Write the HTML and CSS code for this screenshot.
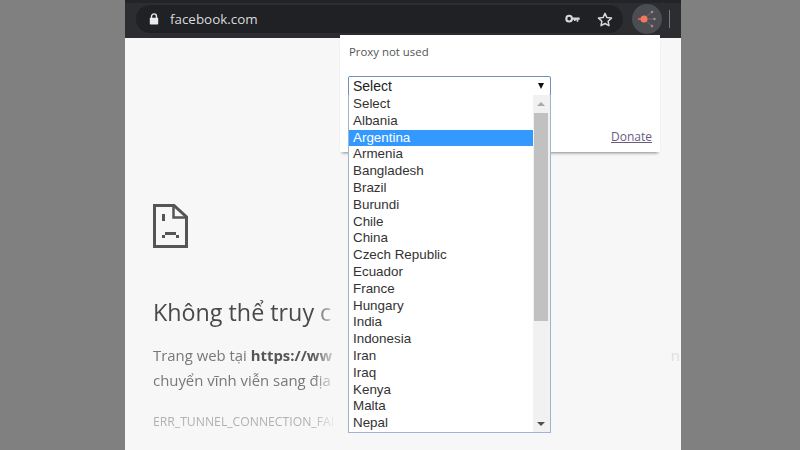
FILE: index.html
```html
<!DOCTYPE html>
<html lang="en">
<head>
    <meta charset="UTF-8">
    <meta name="viewport" content="width=device-width, initial-scale=1.0">
    <title>facebook.com</title>
    <link rel="stylesheet" href="styles.css">
</head>
<body>

    <div class="browser">
        <!-- Toolbar -->
        <div class="toolbar">
            <div class="omnibox">
                <svg class="lock" width="10" height="12" viewBox="0 0 10 12">
                    <path d="M2.500 5V3.400a2.500 2.500 0 0 1 5 0V5" fill="none" stroke="#e8eaed" stroke-width="1.400"/>
                    <rect x="0.800" y="4.800" width="8.400" height="6.800" rx="0.800" fill="#e8eaed"/>
                </svg>
                <span class="url">facebook.com</span>
                <svg class="key" width="15" height="10" viewBox="0 0 16 10">
                    <circle cx="4.400" cy="4.600" r="3" fill="none" stroke="#d5d7da" stroke-width="2.200"/>
                    <path d="M7 3.400h8.600v2.400h-1.400v2h-1.800v-2h-1v1.400H9.600V5.800H7z" fill="#d5d7da"/>
                </svg>
                <svg class="star" width="16" height="15" viewBox="0 0 16 15">
                    <path d="M8 1.400l1.900 4.200 4.600.5-3.400 3.100.9 4.500L8 11.500l-4 2.200.9-4.500L1.500 6.100l4.600-.5z" fill="none" stroke="#d5d7da" stroke-width="1.500" stroke-linejoin="round"/>
                </svg>
            </div>
            <div class="ext-btn">
                <svg width="24" height="24" viewBox="0 0 24 24">
                    <path d="M9 12L17 5M9 12L17 19M9 12H19" stroke="#7d6664" stroke-width="1"/>
                    <circle cx="17" cy="5" r="1.300" fill="#a98a88"/>
                    <circle cx="19.500" cy="12" r="1.200" fill="#a98a88"/>
                    <circle cx="17" cy="19" r="1.300" fill="#a98a88"/>
                    <rect x="3" y="11" width="4" height="2" fill="#e2574a"/>
                    <circle cx="9" cy="12" r="3.500" fill="#f0785f"/>
                </svg>
            </div>
            <div class="tb-divider"></div>
        </div>

        <!-- Error page -->
        <div class="page">
            <svg class="sad-tab" width="35" height="44" viewBox="0 0 35 44">
                <path d="M1.500 1.500H21L33.500 13V42.500H1.500z" fill="none" stroke="#545557" stroke-width="3"/>
                <path d="M20.500 2V13.500H33" fill="none" stroke="#545557" stroke-width="2.500"/>
                <rect x="9" y="10" width="3" height="7" fill="#545557"/>
                <path d="M9 34v-3h3v-3h11v3h3v3h-3v-3H12v3z" fill="#545557"/>
            </svg>
            <h1 class="err-title fade">Không thể truy c</h1>
            <p class="err-text">
                <span class="fade">Trang web tại <b>https://ww</b></span>
                <span class="err-stray">n</span>
            </p>
            <p class="err-text">
                <span class="fade">chuyển vĩnh viễn sang địa</span>
            </p>
            <div class="err-code fade">ERR_TUNNEL_CONNECTION_FAI</div>
        </div>

        <!-- Extension popup -->
        <div class="popup">
            <div class="proxy-status">Proxy not used</div>
            <div class="select-box">
                <span>Select</span>
                <span class="select-arrow"></span>
            </div>
            <a class="donate" href="#">Donate</a>
        </div>

        <!-- Open dropdown list -->
        <div class="dropdown">
            <ul class="options">
                <li>Select</li>
                <li>Albania</li>
                <li class="selected">Argentina</li>
                <li>Armenia</li>
                <li>Bangladesh</li>
                <li>Brazil</li>
                <li>Burundi</li>
                <li>Chile</li>
                <li>China</li>
                <li>Czech Republic</li>
                <li>Ecuador</li>
                <li>France</li>
                <li>Hungary</li>
                <li>India</li>
                <li>Indonesia</li>
                <li>Iran</li>
                <li>Iraq</li>
                <li>Kenya</li>
                <li>Malta</li>
                <li>Nepal</li>
            </ul>
            <div class="scrollbar">
                <span class="scroll-up"></span>
                <div class="scroll-thumb"></div>
                <span class="scroll-down"></span>
            </div>
        </div>
    </div>

</body>
</html>
```

FILE: styles.css
```css
html, body {
    margin: 0;
    padding: 0;
    height: 100%;
    overflow: hidden;
}
body {
    background-color: #808080;
    font-family: "Liberation Sans", Arial, sans-serif;
}
.browser {
    position: relative;
    width: 556px;
    height: 450px;
    margin-left: 125px;
    display: flex;
    flex-direction: column;
    overflow: hidden;
    background-color: #f7f7f7;
}

/* toolbar */
.toolbar {
    height: 38px;
    box-sizing: border-box;
    flex-shrink: 0;
    display: flex;
    align-items: center;
    padding-left: 11px;
    background-color: #2b2d30;
    box-shadow: inset 0 3px 0 #232427;
}
.omnibox {
    width: 487px;
    height: 28px;
    box-sizing: border-box;
    display: flex;
    align-items: center;
    padding: 0 10px 0 13px;
    border-radius: 14px;
    background-color: #202124;
}
.lock {
    margin-right: 11px;
}
.url {
    flex: 1;
    font-family: "Open Sans", sans-serif;
    font-size: 13.400px;
    color: #d8dadd;
}
.key {
    margin-right: 17px;
}
.ext-btn {
    width: 30px;
    height: 30px;
    margin-left: 9px;
    display: flex;
    align-items: center;
    justify-content: center;
    border-radius: 50%;
    background-color: #4a4d52;
}
.tb-divider {
    width: 1px;
    height: 18px;
    margin-left: 7px;
    background-color: #77797c;
}

/* error page */
.page {
    flex: 1;
    padding: 166px 1px 0 28px;
    font-family: "Open Sans", sans-serif;
    white-space: nowrap;
}
.sad-tab {
    display: block;
}
.fade {
    display: block;
    width: 192px;
    -webkit-mask-image: linear-gradient(to right, #000 160px, transparent 186px);
    mask-image: linear-gradient(to right, #000 160px, transparent 186px);
}
.err-title {
    margin: 48px 0 0;
    font-size: 23.300px;
    line-height: 32px;
    font-weight: 400;
    color: #4a4a4c;
}
.err-text {
    margin: 0;
    display: flex;
    justify-content: space-between;
    font-size: 14.900px;
    line-height: 25px;
    color: #77787a;
}
.err-title + .err-text {
    margin-top: 15px;
}
.err-text b {
    color: #555658;
}
.err-stray {
    color: #e0e0e0;
}
.err-code {
    margin-top: 20px;
    font-size: 12.200px;
    color: #b0b1b2;
}

/* popup */
.popup {
    position: absolute;
    left: 215px;
    top: 35px;
    width: 320px;
    height: 117px;
    box-sizing: border-box;
    padding: 9px 9px 0 9px;
    background-color: #fff;
    box-shadow: 0 3px 3px -2px rgba(0, 0, 0, 0.45);
    font-family: "Open Sans", sans-serif;
}
.proxy-status {
    font-size: 11.400px;
    line-height: 16px;
    color: #555;
}
.select-box {
    width: 203px;
    height: 20px;
    box-sizing: border-box;
    margin: 16px 0 0 -1px;
    padding: 0 6px 1px 4px;
    display: flex;
    align-items: center;
    justify-content: space-between;
    border: 1px solid #6f8fc0;
    border-radius: 2px;
    font-family: "Liberation Sans", Arial, sans-serif;
    font-size: 14px;
    color: #222;
}
.select-arrow {
    width: 0;
    height: 0;
    border-left: 3.500px solid transparent;
    border-right: 3.500px solid transparent;
    border-top: 6px solid #111;
}
.donate {
    position: absolute;
    right: 8px;
    top: 93px;
    font-size: 12px;
    color: #6b5b7f;
}

/* dropdown list */
.dropdown {
    position: absolute;
    left: 223px;
    top: 95px;
    width: 203px;
    height: 338px;
    box-sizing: border-box;
    display: flex;
    background-color: #fff;
    border: 1px solid #9fb3d6;
    border-top: none;
}
.options {
    flex: 1;
    margin: 0;
    padding: 1px 0 0;
    list-style: none;
    font-size: 13.400px;
    color: #333;
}
.options li {
    height: 16.800px;
    line-height: 16.800px;
    padding-left: 4px;
}
.options .selected {
    background-color: #3399ff;
    color: #fff;
}
.scrollbar {
    width: 17px;
    position: relative;
    background-color: #f1f1f1;
}
.scroll-thumb {
    position: absolute;
    left: 1px;
    right: 2px;
    top: 18px;
    height: 208px;
    background-color: #c1c1c1;
}
.scroll-up, .scroll-down {
    position: absolute;
    left: 4px;
    width: 0;
    height: 0;
    border-left: 4px solid transparent;
    border-right: 4px solid transparent;
}
.scroll-up {
    top: 7px;
    border-bottom: 4px solid #a9a9a9;
}
.scroll-down {
    bottom: 6px;
    border-top: 4px solid #505050;
}
```
